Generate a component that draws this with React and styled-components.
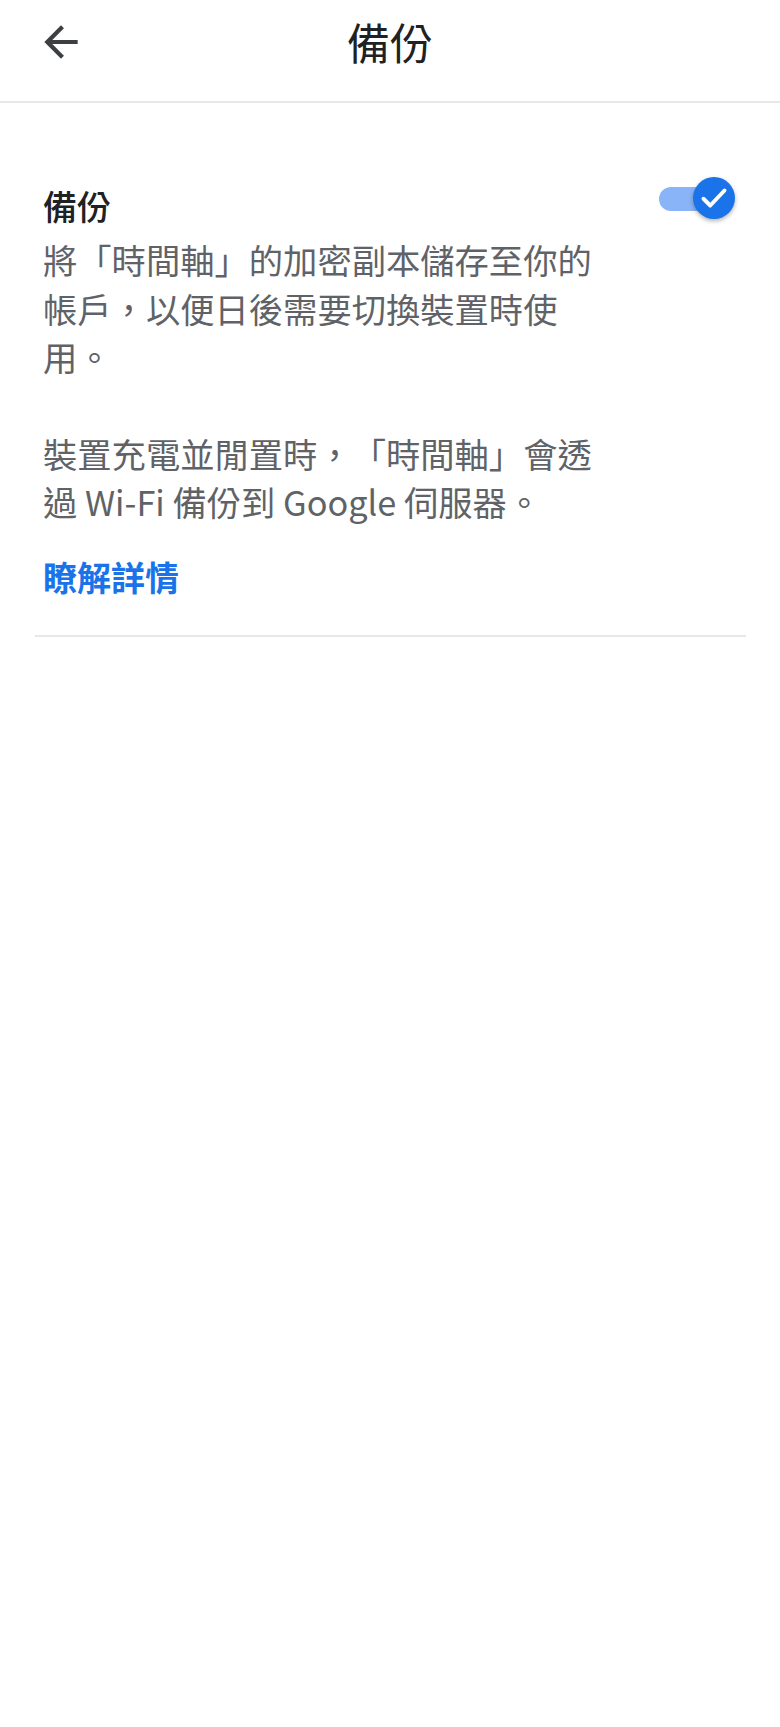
import React from "react";
import styled, { createGlobalStyle } from "styled-components";

const GlobalStyle = createGlobalStyle`
  html, body {
    margin: 0;
    padding: 0;
    background: #ffffff;
  }
  body {
    font-family: "Noto Sans CJK TC", "Noto Sans", Roboto, sans-serif;
    text-spacing-trim: space-all;
    -webkit-font-smoothing: antialiased;
  }
`;

const Page = styled.div`
  width: 780px;
  min-height: 1727px;
  background: #ffffff;
  display: flex;
  flex-direction: column;
`;

const Header = styled.header`
  height: 101px;
  display: grid;
  grid-template-columns: 100px 1fr 100px;
  align-items: center;
  border-bottom: 2px solid #e8e8e8;
  box-sizing: content-box;
`;

const BackButton = styled.button`
  width: 50px;
  height: 50px;
  margin: -18px 0 0 36px;
  padding: 0;
  border: 0;
  background: none;
  color: #3c4043;
  display: flex;
  align-items: center;
  justify-content: center;
  cursor: pointer;
`;

const Title = styled.h1`
  margin: -19px 0 0;
  text-align: center;
  font-size: 43px;
  font-weight: 400;
  line-height: 56px;
  color: #202124;
`;

const Section = styled.section`
  padding: 81px 45px 0 43px;
`;

const Row = styled.div`
  display: flex;
  justify-content: space-between;
  align-items: flex-start;
`;

const TextCol = styled.div`
  width: 572px;
`;

const Label = styled.div`
  font-size: 34px;
  font-weight: 500;
  line-height: 44px;
  color: #202124;
`;

const Paragraph = styled.p`
  margin: ${(p) => p.$top}px 0 0;
  font-size: 34.3px;
  line-height: 48.5px;
  color: #5f6368;
`;

const LearnMore = styled.a`
  display: block;
  margin-top: 27px;
  font-size: 34px;
  font-weight: 700;
  line-height: 48px;
  color: #1a73e8;
  text-decoration: none;
`;

const Switch = styled.div`
  position: relative;
  width: 76px;
  height: 42px;
  margin-top: -7px;
  flex-shrink: 0;
`;

const Track = styled.div`
  position: absolute;
  left: 0;
  top: 10px;
  width: 62px;
  height: 24px;
  border-radius: 12px;
  background: #8ab4f8;
`;

const Thumb = styled.div`
  position: absolute;
  right: 0;
  top: 0;
  width: 42px;
  height: 42px;
  border-radius: 50%;
  background: #1a73e8;
  box-shadow: 0 2px 4px rgba(0, 0, 0, 0.3);
  display: flex;
  align-items: center;
  justify-content: center;
`;

const Divider = styled.hr`
  margin: 34px 34px 0 35px;
  border: 0;
  border-top: 2px solid #e8e8e8;
`;

function ArrowBack() {
  return (
    <svg width="50" height="50" viewBox="0 0 24 24" fill="currentColor">
      <path d="M20 11H7.83l5.59-5.59L12 4l-8 8 8 8 1.41-1.41L7.83 13H20v-2z" />
    </svg>
  );
}

function Check() {
  return (
    <svg width="36" height="36" viewBox="0 0 24 24" fill="none">
      <path
        d="M5 12.5l4.5 4.5L19 7"
        stroke="#ffffff"
        strokeWidth="2.6"
        strokeLinecap="round"
        strokeLinejoin="round"
      />
    </svg>
  );
}

export default function App() {
  return (
    <>
      <GlobalStyle />
      <Page>
        <Header>
          <BackButton aria-label="返回">
            <ArrowBack />
          </BackButton>
          <Title>備份</Title>
          <span />
        </Header>
        <Section>
          <Row>
            <TextCol>
              <Label>備份</Label>
              <Paragraph $top={7}>
                將「時間軸」的加密副本儲存至你的帳戶，以便日後需要切換裝置時使用。
              </Paragraph>
              <Paragraph $top={48}>
                裝置充電並閒置時，「時間軸」會透過 Wi-Fi 備份到 Google 伺服器。
              </Paragraph>
              <LearnMore href="#">瞭解詳情</LearnMore>
            </TextCol>
            <Switch>
              <Track />
              <Thumb>
                <Check />
              </Thumb>
            </Switch>
          </Row>
        </Section>
        <Divider />
      </Page>
    </>
  );
}
